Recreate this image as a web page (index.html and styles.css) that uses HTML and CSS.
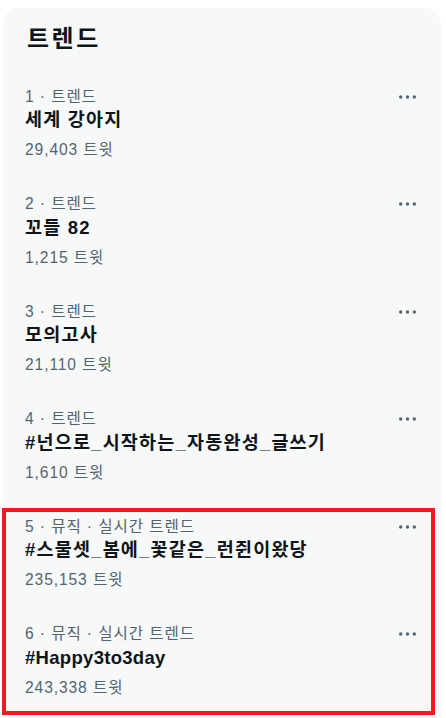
FILE: index.html
```html
<!DOCTYPE html>
<html>
<head>
<meta charset="utf-8">
<link rel="stylesheet" href="styles.css">
</head>
<body>
<div class="trends">
    <div class="trends-header">
        <h2>트렌드</h2>
    </div>

    <div class="trend">
        <div class="trend-text">
            <div class="trend-meta">1 · 트렌드</div>
            <div class="trend-name">세계 강아지</div>
            <div class="trend-count">29,403 트윗</div>
        </div>
        <svg class="more" width="17" height="4" viewBox="0 0 17 4"><circle cx="1.7" cy="2" r="1.7"/><circle cx="8.5" cy="2" r="1.7"/><circle cx="15.3" cy="2" r="1.7"/></svg>
    </div>

    <div class="trend">
        <div class="trend-text">
            <div class="trend-meta">2 · 트렌드</div>
            <div class="trend-name">꼬들 82</div>
            <div class="trend-count">1,215 트윗</div>
        </div>
        <svg class="more" width="17" height="4" viewBox="0 0 17 4"><circle cx="1.7" cy="2" r="1.7"/><circle cx="8.5" cy="2" r="1.7"/><circle cx="15.3" cy="2" r="1.7"/></svg>
    </div>

    <div class="trend">
        <div class="trend-text">
            <div class="trend-meta">3 · 트렌드</div>
            <div class="trend-name">모의고사</div>
            <div class="trend-count">21,110 트윗</div>
        </div>
        <svg class="more" width="17" height="4" viewBox="0 0 17 4"><circle cx="1.7" cy="2" r="1.7"/><circle cx="8.5" cy="2" r="1.7"/><circle cx="15.3" cy="2" r="1.7"/></svg>
    </div>

    <div class="trend">
        <div class="trend-text">
            <div class="trend-meta">4 · 트렌드</div>
            <div class="trend-name">#넌으로_시작하는_자동완성_글쓰기</div>
            <div class="trend-count">1,610 트윗</div>
        </div>
        <svg class="more" width="17" height="4" viewBox="0 0 17 4"><circle cx="1.7" cy="2" r="1.7"/><circle cx="8.5" cy="2" r="1.7"/><circle cx="15.3" cy="2" r="1.7"/></svg>
    </div>

    <div class="highlight">
        <div class="trend">
            <div class="trend-text">
                <div class="trend-meta">5 · 뮤직 · 실시간 트렌드</div>
                <div class="trend-name">#스물셋_봄에_꽃같은_런쥔이왔당</div>
                <div class="trend-count">235,153 트윗</div>
            </div>
            <svg class="more" width="17" height="4" viewBox="0 0 17 4"><circle cx="1.7" cy="2" r="1.7"/><circle cx="8.5" cy="2" r="1.7"/><circle cx="15.3" cy="2" r="1.7"/></svg>
        </div>

        <div class="trend">
            <div class="trend-text">
                <div class="trend-meta">6 · 뮤직 · 실시간 트렌드</div>
                <div class="trend-name latin">#Happy3to3day</div>
                <div class="trend-count">243,338 트윗</div>
            </div>
            <svg class="more" width="17" height="4" viewBox="0 0 17 4"><circle cx="1.7" cy="2" r="1.7"/><circle cx="8.5" cy="2" r="1.7"/><circle cx="15.3" cy="2" r="1.7"/></svg>
        </div>
    </div>
</div>
</body>
</html>
```

FILE: styles.css
```css
body {
    margin: 0;
    background: white;
    font-family: "Liberation Sans", "Noto Sans CJK KR", sans-serif;
    color: #0f1419;
}

.trends {
    margin: 8px 5px 0 3px;
    min-height: 730px;
    background: #f7f9f9;
    border-radius: 16px 16px 0 0;
}

.trends-header {
    padding: 15px 22px 14.5px 24px;
}

.trends-header h2 {
    margin: 0;
    font-size: 24px;
    line-height: 32px;
    font-weight: bold;
    letter-spacing: 2.5px;
}

.trend {
    display: flex;
    justify-content: space-between;
    align-items: flex-start;
    padding: 17px 25px 17px 22px;
}

.trend-meta {
    font-size: 15.6px;
    line-height: 20px;
    color: #536471;
    letter-spacing: 0.9px;
}

.trend-name {
    margin-top: 1.5px;
    font-size: 18.5px;
    line-height: 24px;
    font-weight: bold;
    letter-spacing: 1.2px;
}

.trend-name.latin {
    letter-spacing: 0.3px;
}

.trend-count {
    margin-top: 8px;
    font-size: 15.6px;
    line-height: 20px;
    color: #536471;
    letter-spacing: 0.9px;
}

.more {
    margin-top: 8px;
    fill: #536471;
}

.highlight {
    position: relative;
}

.highlight::after {
    content: "";
    position: absolute;
    top: 8.5px;
    bottom: -0.5px;
    left: -1px;
    right: 6px;
    border: 4.5px solid #ed1c24;
    pointer-events: none;
}
```
